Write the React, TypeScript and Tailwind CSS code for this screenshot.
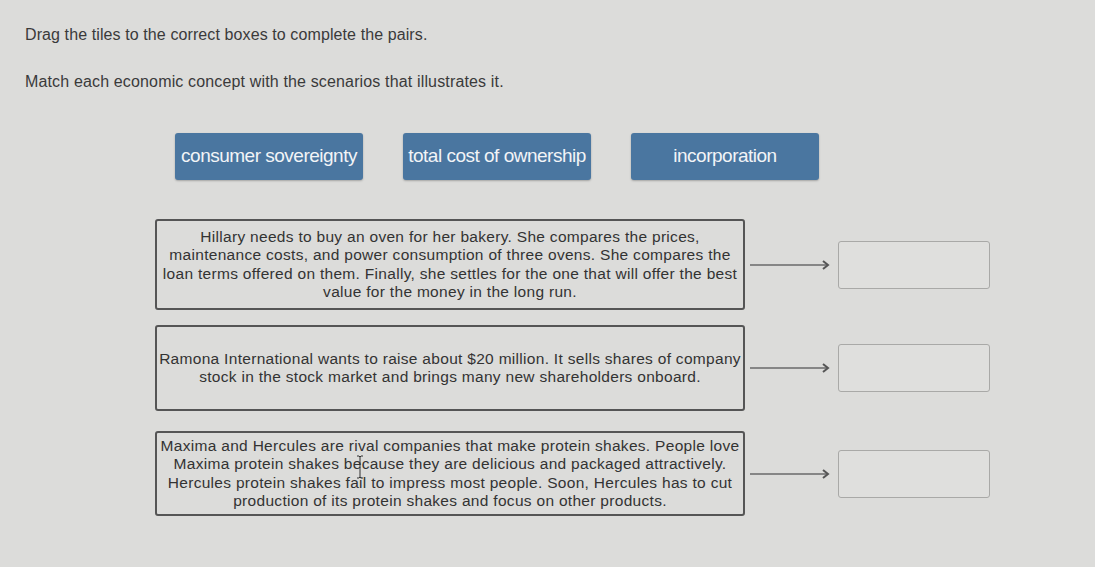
import React from "react";

const tiles = ["consumer sovereignty", "total cost of ownership", "incorporation"];

type Pair = { lines: string[]; h: string; mt: string };

const pairs: Pair[] = [
  {
    lines: [
      "Hillary needs to buy an oven for her bakery. She compares the prices,",
      "maintenance costs, and power consumption of three ovens. She compares the",
      "loan terms offered on them. Finally, she settles for the one that will offer the best",
      "value for the money in the long run.",
    ],
    h: "h-[91px]",
    mt: "mt-[39px]",
  },
  {
    lines: [
      "Ramona International wants to raise about $20 million. It sells shares of company",
      "stock in the stock market and brings many new shareholders onboard.",
    ],
    h: "h-[86px]",
    mt: "mt-[15px]",
  },
  {
    lines: [
      "Maxima and Hercules are rival companies that make protein shakes. People love",
      "Maxima protein shakes because they are delicious and packaged attractively.",
      "Hercules protein shakes fail to impress most people. Soon, Hercules has to cut",
      "production of its protein shakes and focus on other products.",
    ],
    h: "h-[85px]",
    mt: "mt-[20px]",
  },
];

function Arrow() {
  return (
    <svg width="84" height="14" viewBox="0 0 84 14" className="shrink-0">
      <line x1="2" y1="7" x2="80" y2="7" stroke="#6a6a6a" strokeWidth="1.5" />
      <polyline points="75,3 80,7 75,11" fill="none" stroke="#555" strokeWidth="2" />
    </svg>
  );
}

export default function App() {
  return (
    <div className="relative w-[1095px] h-[567px] overflow-hidden bg-[#dcdcda] pl-[25px] pt-[25px] font-['Liberation_Sans',Arial,sans-serif] text-[#3a3a3a]">
      <p className="text-[16px] leading-[20px] tracking-[0.1px]">Drag the tiles to the correct boxes to complete the pairs.</p>
      <p className="mt-[27px] text-[16px] leading-[20px] tracking-[0.15px]">Match each economic concept with the scenarios that illustrates it.</p>

      <div className="mt-[41px] ml-[150px] flex items-center gap-[40px]">
        {tiles.map((t) => (
          <div
            key={t}
            className="flex h-[47px] w-[188px] items-center justify-center rounded-[3px] bg-[#4a76a0] text-[19px] tracking-[-0.5px] text-[#f2f4f7] shadow-[0_1px_2px_rgba(0,0,0,0.25)]"
          >
            {t}
          </div>
        ))}
      </div>

      {pairs.map((p, i) => (
        <div key={i} className={`${p.mt} ml-[130px] flex items-center`}>
          <div
            className={`${p.h} flex w-[590px] flex-col items-center justify-center rounded-[3px] border-2 border-[#555] text-[15.5px] leading-[18.5px] tracking-[0.3px] text-[#333]`}
          >
            {p.lines.map((l) => (
              <span key={l} className="whitespace-nowrap">
                {l}
              </span>
            ))}
          </div>
          <div className="ml-[3px]">
            <Arrow />
          </div>
          <div className="ml-[6px] h-[48px] w-[152px] rounded-[3px] border-[1.5px] border-[#a9a9a7] bg-[#dfdfdd]" />
        </div>
      ))}

      {/* text cursor resting over the last scenario */}
      <svg className="absolute left-[356px] top-[455px]" width="8" height="24" viewBox="0 0 8 24">
        <path d="M1 1 H3 L4 2 L5 1 H7 M4 2 V22 M1 23 H3 L4 22 L5 23 H7" fill="none" stroke="#333" strokeWidth="1" />
      </svg>
    </div>
  );
}
